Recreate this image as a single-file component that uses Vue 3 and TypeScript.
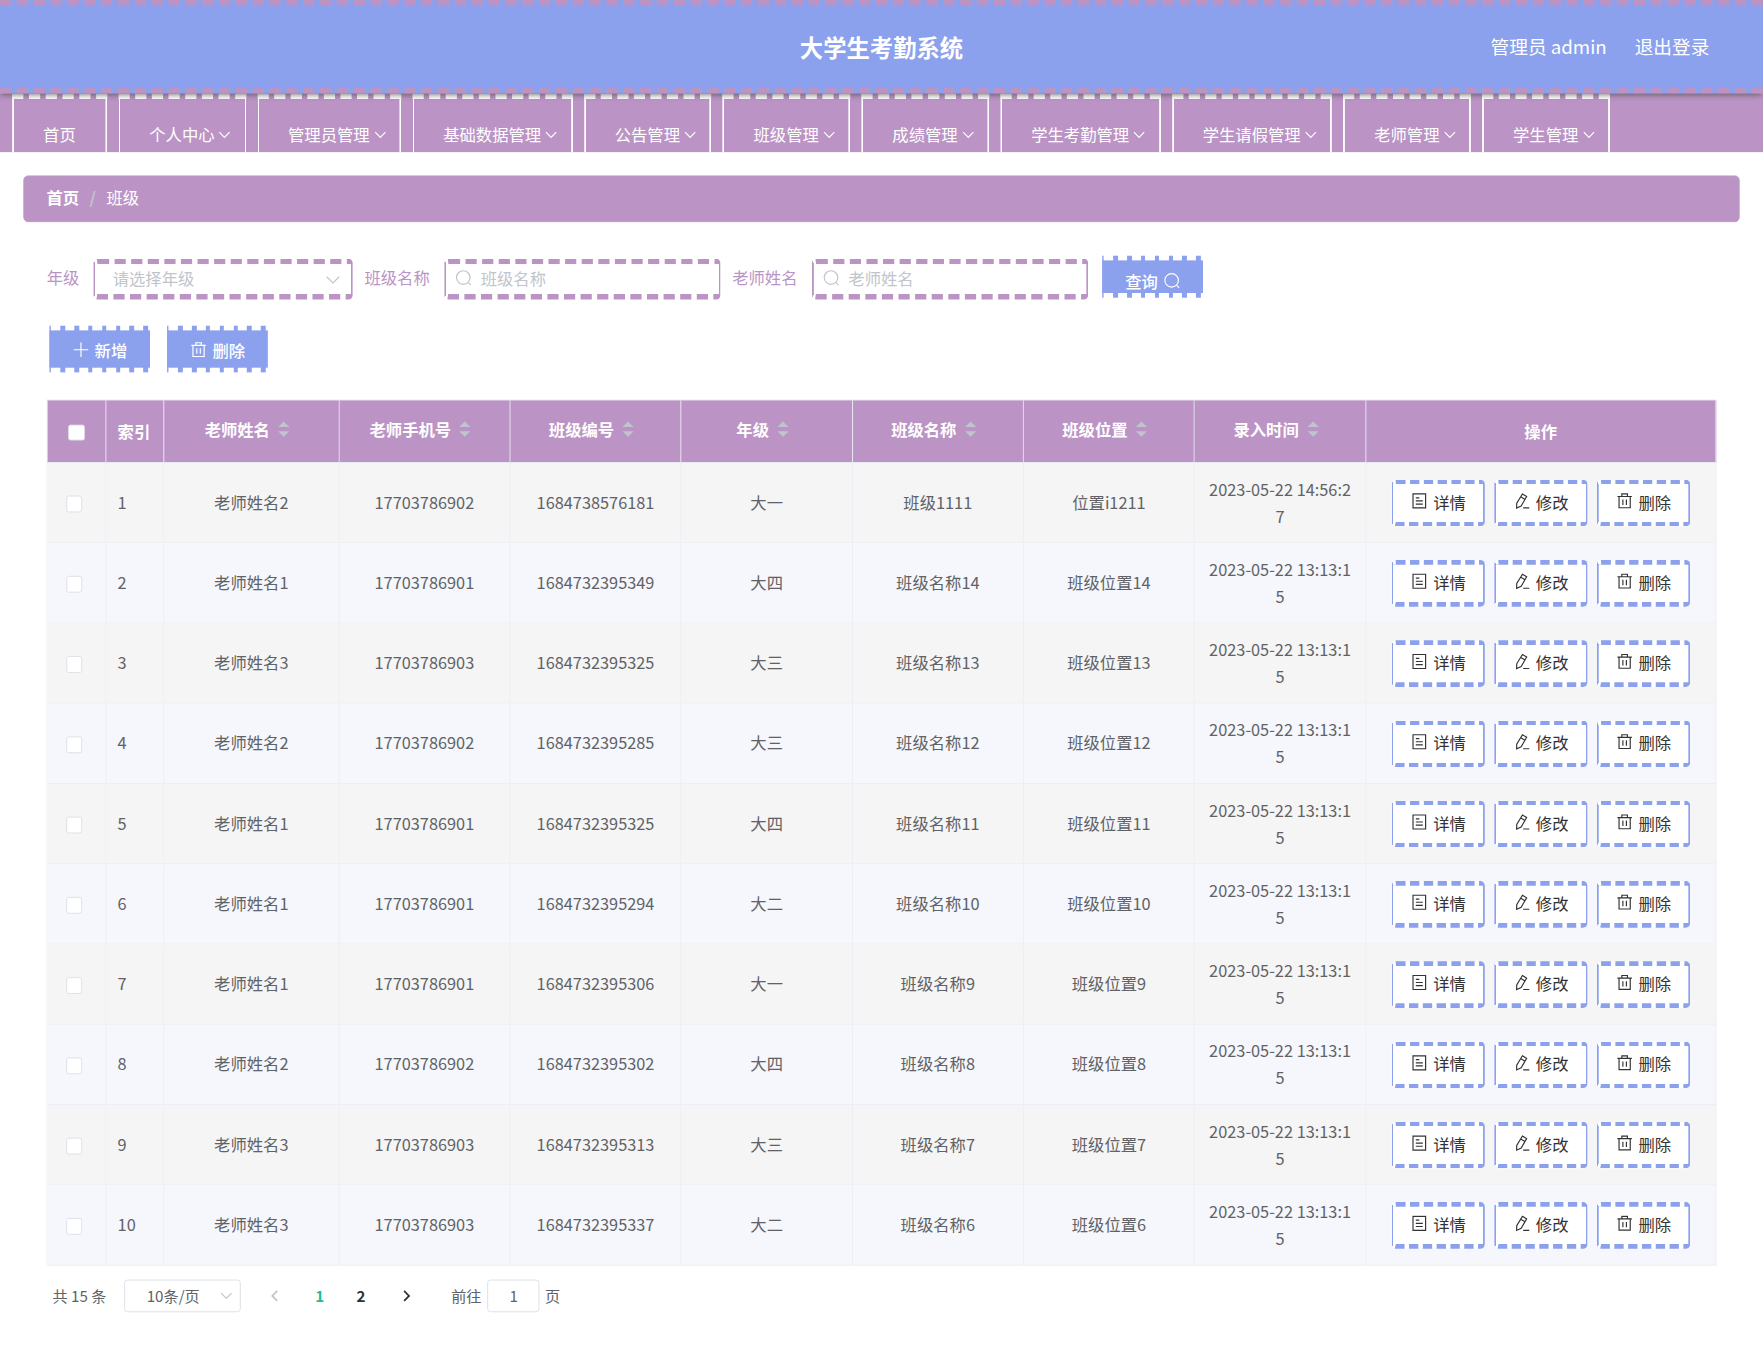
<script setup lang="ts">
import { ref } from 'vue'

interface MenuEntry {
  label: string
  children: boolean
}

interface ClassRow {
  teacher: string
  phone: string
  code: string
  grade: string
  name: string
  place: string
  time: string
}

const menu: MenuEntry[] = [
  { label: '首页', children: false },
  { label: '个人中心', children: true },
  { label: '管理员管理', children: true },
  { label: '基础数据管理', children: true },
  { label: '公告管理', children: true },
  { label: '班级管理', children: true },
  { label: '成绩管理', children: true },
  { label: '学生考勤管理', children: true },
  { label: '学生请假管理', children: true },
  { label: '老师管理', children: true },
  { label: '学生管理', children: true },
]

const columns: string[] = ['老师姓名', '老师手机号', '班级编号', '年级', '班级名称', '班级位置', '录入时间']

const early = '2023-05-22 13:13:15'
const rows = ref<ClassRow[]>([
  { teacher: '老师姓名2', phone: '17703786902', code: '1684738576181', grade: '大一', name: '班级1111', place: '位置i1211', time: '2023-05-22 14:56:27' },
  { teacher: '老师姓名1', phone: '17703786901', code: '1684732395349', grade: '大四', name: '班级名称14', place: '班级位置14', time: early },
  { teacher: '老师姓名3', phone: '17703786903', code: '1684732395325', grade: '大三', name: '班级名称13', place: '班级位置13', time: early },
  { teacher: '老师姓名2', phone: '17703786902', code: '1684732395285', grade: '大三', name: '班级名称12', place: '班级位置12', time: early },
  { teacher: '老师姓名1', phone: '17703786901', code: '1684732395325', grade: '大四', name: '班级名称11', place: '班级位置11', time: early },
  { teacher: '老师姓名1', phone: '17703786901', code: '1684732395294', grade: '大二', name: '班级名称10', place: '班级位置10', time: early },
  { teacher: '老师姓名1', phone: '17703786901', code: '1684732395306', grade: '大一', name: '班级名称9', place: '班级位置9', time: early },
  { teacher: '老师姓名2', phone: '17703786902', code: '1684732395302', grade: '大四', name: '班级名称8', place: '班级位置8', time: early },
  { teacher: '老师姓名3', phone: '17703786903', code: '1684732395313', grade: '大三', name: '班级名称7', place: '班级位置7', time: early },
  { teacher: '老师姓名3', phone: '17703786903', code: '1684732395337', grade: '大二', name: '班级名称6', place: '班级位置6', time: early },
])
</script>

<template>
  <div class="viewport">
    <div class="page">
      <header class="header">
        <h1 class="title">大学生考勤系统</h1>
        <div class="account">
          <span>管理员 admin</span>
          <span>退出登录</span>
        </div>
      </header>

      <nav class="nav">
        <div v-for="entry in menu" :key="entry.label" class="nav-item">
          {{ entry.label }}
          <svg v-if="entry.children" class="nav-arrow" viewBox="0 0 12 12"><path d="M1.6 3.7 6 8.2l4.4-4.5" /></svg>
        </div>
      </nav>

      <main class="main">
        <div class="crumbs">
          <b>首页</b><i>/</i><span>班级</span>
        </div>

        <div class="filters">
          <label>年级</label>
          <div class="field select">
            <span>请选择年级</span>
            <svg class="chev" viewBox="0 0 14 14"><path d="M1.6 4.4 7 9.8l5.4-5.4" /></svg>
          </div>
          <label>班级名称</label>
          <div class="field search">
            <svg class="ico" viewBox="0 0 14 14"><circle cx="6.7" cy="6.7" r="5.8" /><path d="m11 11 2.2 2.2" /></svg>
            <span>班级名称</span>
          </div>
          <label>老师姓名</label>
          <div class="field search">
            <svg class="ico" viewBox="0 0 14 14"><circle cx="6.7" cy="6.7" r="5.8" /><path d="m11 11 2.2 2.2" /></svg>
            <span>老师姓名</span>
          </div>
          <button class="btn query">
            <span>查询</span>
            <svg class="ico" viewBox="0 0 14 14"><circle cx="6.7" cy="6.7" r="5.8" /><path d="m11 11 2.2 2.2" /></svg>
          </button>
        </div>

        <div class="actions">
          <button class="btn">
            <svg class="ico" viewBox="0 0 14 14"><path d="M7 .8v12.4M.8 7h12.4" /></svg>
            <span>新增</span>
          </button>
          <button class="btn">
            <svg class="ico" viewBox="0 0 14 14"><path d="M.8 3.2h12.4M4.6 3V1h4.8v2M2.2 3.4v9.4h9.6V3.4M5.5 5.8v4.6M8.5 5.8v4.6" /></svg>
            <span>删除</span>
          </button>
        </div>

        <table class="grid">
          <colgroup>
            <col class="c-narrow" /><col class="c-narrow" /><col class="c-teacher" />
            <col v-for="n in 6" :key="n" /><col class="c-ops" />
          </colgroup>
          <thead>
            <tr>
              <th class="pick-all"><span class="check" /></th>
              <th class="left">索引</th>
              <th v-for="column in columns" :key="column">
                <span class="sortable">
                  {{ column }}
                  <svg class="carets" viewBox="0 0 24 14"><path d="M7.2 5.2 12 .4l4.8 4.8zM7.2 8.8h9.6L12 13.6z" /></svg>
                </span>
              </th>
              <th>操作</th>
            </tr>
          </thead>
          <tbody>
            <tr v-for="(row, index) in rows" :key="index">
              <td class="pick"><span class="check" /></td>
              <td class="left">{{ index + 1 }}</td>
              <td>{{ row.teacher }}</td>
              <td>{{ row.phone }}</td>
              <td>{{ row.code }}</td>
              <td>{{ row.grade }}</td>
              <td>{{ row.name }}</td>
              <td>{{ row.place }}</td>
              <td class="time">{{ row.time }}</td>
              <td>
                <div class="ops">
                  <button class="op">
                    <svg class="ico" viewBox="0 0 14 14"><path d="M1.6 1h10.8v12H1.6zM4 4.3h3M4 7h6M4 9.7h6" /></svg>
                    <span>详情</span>
                  </button>
                  <button class="op">
                    <svg class="ico" viewBox="0 0 14 14"><path d="M7.4 1 11 3.2 6.3 11.3 2.4 13.1 2.5 9zM6 3.5l3.6 2.2M8 13h5.4" /></svg>
                    <span>修改</span>
                  </button>
                  <button class="op">
                    <svg class="ico" viewBox="0 0 14 14"><path d="M.8 3.2h12.4M4.6 3V1h4.8v2M2.2 3.4v9.4h9.6V3.4M5.5 5.8v4.6M8.5 5.8v4.6" /></svg>
                    <span>删除</span>
                  </button>
                </div>
              </td>
            </tr>
          </tbody>
        </table>

        <div class="pager">
          <span class="total">共 15 条</span>
          <div class="box size">
            <span>10条/页</span>
            <svg viewBox="0 0 12 12"><path d="M1.6 3.7 6 8.2l4.4-4.5" /></svg>
          </div>
          <svg class="step off" viewBox="0 0 12 12"><path d="M8 1.8 3.8 6 8 10.2" /></svg>
          <b class="num current">1</b>
          <b class="num">2</b>
          <svg class="step" viewBox="0 0 12 12"><path d="M4 1.8 8.2 6 4 10.2" /></svg>
          <span class="jump">前往</span>
          <div class="box goto">1</div>
          <span>页</span>
        </div>
      </main>
    </div>
  </div>
</template>

<style>
body {
  background: #fff;
}
</style>

<style scoped>
.viewport {
  width: 100vw;
  height: 100vh;
  overflow: hidden;
}

.page {
  --purple: #bb94c5;
  --blue: #8ca1ed;
  --line: #ebeef5;
  width: 1511.2px;
  zoom: 1.25;
  transform: scale(0.9333);
  transform-origin: 0 0;
  font: 14px/1.5 'Noto Sans CJK SC', sans-serif;
  color: #606266;
}

.page * {
  box-sizing: border-box;
}

svg {
  fill: none;
  stroke: currentColor;
  stroke-width: 1;
  flex: none;
}

.ico {
  width: 14px;
  height: 14px;
}

.header {
  position: relative;
  z-index: 1;
  display: grid;
  grid-template-columns: 1fr auto 1fr;
  align-items: center;
  height: 80px;
  border: dashed var(--purple);
  border-width: 5px 0;
  background: var(--blue);
  box-shadow: 0 1px 6px #444;
  color: #fff;
}

.title {
  grid-column: 2;
  margin: 0;
  padding-top: 1px;
  font-size: 20px;
  font-weight: 700;
}

.account {
  display: flex;
  justify-content: flex-end;
  gap: 24px;
  padding: 0 46px 0 0;
  font-size: 16px;
}

.nav {
  display: flex;
  gap: 9.6px;
  height: 50px;
  padding-left: 10.5px;
  overflow: hidden;
  background: var(--purple);
  color: #fff;
}

.nav-item {
  position: relative;
  flex: none;
  height: 70px;
  padding: 0 25.4px 0 24.8px;
  border: 2px solid #fff;
  border-top: 5px dashed #fff;
  line-height: 60px;
}

.nav-arrow {
  position: absolute;
  top: 24.6px;
  right: 10.6px;
  width: 12px;
  height: 12px;
}

.main {
  padding: 20px;
}

.crumbs {
  display: flex;
  align-items: center;
  height: 40px;
  padding: 0 19px;
  border: 1px solid #ba9cc4;
  border-radius: 4px;
  background: var(--purple);
  color: #fff;
}

.crumbs i {
  margin: 0 9px;
  color: #c0c4cc;
  font-style: normal;
  font-weight: 700;
}

.filters {
  display: flex;
  align-items: center;
  margin: 29.4px 0 0 20px;
  height: 36px;
}

.filters label {
  padding-right: 12px;
  color: var(--purple);
}

.field {
  display: flex;
  align-items: center;
  height: 35.2px;
  margin-top: 4px;
  margin-right: 10px;
  padding-bottom: 2.6px;
  border: 2px solid var(--purple);
  border-top: 5px dashed var(--purple);
  border-bottom: 5px dashed var(--purple);
  border-radius: 4px;
  background: #fff;
  color: #c0c4cc;
}

.select {
  justify-content: space-between;
  width: 222.4px;
  padding-left: 15px;
  padding-right: 8.6px;
}

.chev {
  width: 14px;
  height: 14px;
  margin-top: 4px;
}

.search {
  width: 237.2px;
  padding-left: 8.4px;
  gap: 7.6px;
}

/* Ticket edge: solid body, evenly spaced teeth above and below it. */
.btn {
  display: flex;
  align-items: center;
  gap: 5px;
  height: 40px;
  padding: 1px 19.7px 0;
  border: 4px solid transparent;
  border-width: 4px 0;
  background:
    linear-gradient(var(--blue), var(--blue)) padding-box,
    linear-gradient(var(--blue), var(--blue)) 0 0 / 1.2px 100% no-repeat border-box,
    repeating-linear-gradient(90deg, transparent 0 8px, var(--blue) 8px 11.8px) 1.6px 0 border-box;
  color: #fff;
  font: 500 14px 'Noto Sans CJK SC', sans-serif;
}

.query {
  height: 36px;
  margin: 0 0 0 2px;
  padding-top: 7px;
}

.actions {
  display: flex;
  gap: 14.6px;
  margin: 24px 0 0 22.4px;
}

.grid {
  width: 1431px;
  margin: 23px 0 0 20px;
  border-collapse: separate;
  border-spacing: 0;
  table-layout: fixed;
  border-top: 1px solid var(--line);
  border-left: 1px solid var(--line);
}

.c-narrow {
  width: 50px;
}

.c-teacher {
  width: 150px;
}

.c-ops {
  width: 300px;
}

th,
td {
  padding: 0 10px;
  border-right: 1px solid var(--line);
  border-bottom: 1px solid var(--line);
  line-height: 23px;
  text-align: center;
  word-break: break-all;
}

th {
  height: 53.6px;
  background: var(--purple);
  color: #fff;
  font-weight: 700;
}

td {
  height: 68.8px;
}

tbody tr:nth-child(odd) {
  background: #f5f5f5;
}

tbody tr:nth-child(even) {
  background: #f5f7fc;
}

.left {
  text-align: left;
}

.time {
  padding-top: 0.6px;
}

.check {
  display: block;
  width: 14px;
  height: 14px;
  margin: 0 auto;
  border: 1px solid #dcdfe6;
  border-radius: 2px;
  background: #fff;
}

.pick {
  padding-top: 2px;
  padding-right: 14px;
}

.pick-all {
  padding-top: 2px;
}

.sortable {
  display: flex;
  align-items: center;
  justify-content: center;
  padding-bottom: 3px;
}

.carets {
  width: 24px;
  height: 14px;
  fill: #c0c4cc;
  stroke: none;
}

.ops {
  display: flex;
  justify-content: center;
  gap: 7.8px;
  margin: 0 -10px;
}

.op {
  display: flex;
  align-items: center;
  gap: 5px;
  height: 40px;
  padding: 0 14.6px 2.4px 15.4px;
  border: 2px solid var(--blue);
  border-top: 4px dashed var(--blue);
  border-bottom: 4px dashed var(--blue);
  border-radius: 4px;
  background: #fff;
  color: #333;
  font: 14px 'Noto Sans CJK SC', sans-serif;
}

.pager {
  display: flex;
  align-items: center;
  margin: 11.8px 0 0 25px;
  font-size: 13px;
}

.box {
  display: flex;
  align-items: center;
  justify-content: center;
  height: 28px;
  border: 1px solid #dcdfe6;
  border-radius: 3px;
}

.size {
  width: 100px;
  margin-left: 15px;
  gap: 16.6px;
  padding-left: 13px;
}

.size svg {
  width: 12px;
  height: 12px;
  color: #c0c4cc;
}

.step {
  width: 12px;
  height: 12px;
  margin: 0 13px 0 15px;
  stroke-width: 1.5;
  color: #303133;
}

.off {
  margin: 0 15px 0 23px;
  color: #c0c4cc;
}

.num {
  width: 35.5px;
  color: #303133;
  text-align: center;
}

.current {
  color: #1abc9c;
}

.jump {
  margin: 0 5px 0 19.5px;
}

.goto {
  width: 45px;
  margin-right: 4.5px;
}
</style>
